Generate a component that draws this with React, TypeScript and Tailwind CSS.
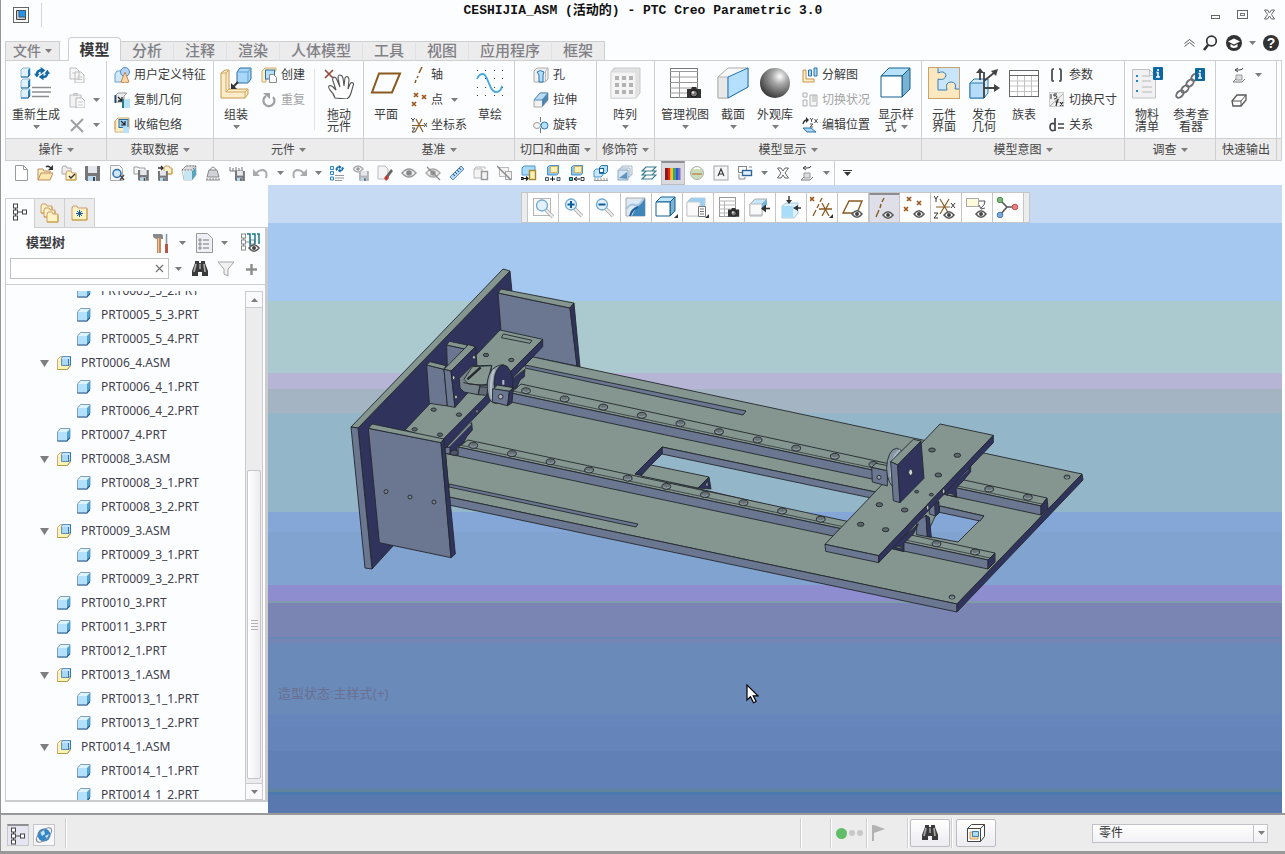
import React, { type ReactNode } from "react";

type Kids = { children?: ReactNode };

function Ico({ w = 16, h, children }: Kids & { w?: number; h?: number }) {
  return (
    <svg width={w} height={h ?? w} viewBox={`0 0 ${w} ${h ?? w}`} fill="none" aria-hidden="true" className="block shrink-0">
      {children}
    </svg>
  );
}

function Caret({ dark = false }: { dark?: boolean }) {
  return (
    <svg width="7" height="4" viewBox="0 0 7 4" aria-hidden="true" className="block shrink-0">
      <path d="M0 0h7L3.5 4z" fill={dark ? "#333" : "#7d7d7d"} />
    </svg>
  );
}

/* ---------- shared glyphs ---------- */

function Box({ x = 0, y = 0, s = 10, d = 3, front = "#b5e0fc", top = "#e6f4fd", side = "#4f9cc9", line = "#2c6a9c" }) {
  return (
    <g stroke={line} strokeWidth="1" strokeLinejoin="round">
      <path d={`M${x} ${y + d}l${d}-${d}h${s}l-${d} ${d}z`} fill={top} />
      <path d={`M${x + s} ${y + d}l${d}-${d}v${s}l-${d} ${d}z`} fill={side} />
      <rect x={x} y={y + d} width={s} height={s} fill={front} />
    </g>
  );
}

const MiniBox = ({ y }: { y: number }) => (
  <g>
    <path d={`M1 ${y + 2}l2-2h7v6l-2 3H1z`} fill="#dff1fc" stroke="#8fb9d4" />
    <path d={`M8 ${y + 2}l2-2v7l-2 2z`} fill="#2d7fb5" />
    <path d={`M1 ${y + 9}h7l2-3`} stroke="#1f6a9f" strokeWidth="1.200" />
  </g>
);

const Eye = ({ x = 0, y = 0 }) => (
  <g transform={`translate(${x} ${y})`}>
    <path d="M0 4q5-6.500 10 0q-5 6.500-10 0z" fill="#fff" stroke="#555" strokeWidth="1.500" />
    <circle cx="5" cy="4" r="2" fill="#444" />
  </g>
);

const Camera = ({ x = 0, y = 0 }) => (
  <g transform={`translate(${x} ${y})`}>
    <path d="M0 2h4l1-2h4l1 2h4v9H0z" fill="#333" />
    <circle cx="7" cy="6.500" r="3.500" fill="#777" stroke="#111" />
    <circle cx="6" cy="5.500" r="1.300" fill="#ddd" />
  </g>
);

const Floppy = ({ x = 0, y = 0, s = 1, c = "#77777a" }) => (
  <g transform={`translate(${x} ${y}) scale(${s})`}>
    <path d="M0 0h15v15H1.500L0 13.500z" fill={c} />
    <rect x="3" y="0" width="9" height="7" fill="#e4e7ec" />
    <rect x="3" y="10" width="8" height="5" fill="#b9d9f0" />
    <rect x="8" y="11" width="2" height="4" fill="#444" />
  </g>
);

const Cross = ({ x = 0, y = 0, s = 4 }) => (
  <path d={`M${x} ${y}l${s} ${s}m0-${s}l-${s} ${s}`} stroke="#a3561c" strokeWidth="1.700" />
);

const Sync = ({ x = 0, y = 0, s = 1 }) => (
  <g transform={`translate(${x} ${y}) scale(${s})`}>
    <path d="M3 8Q3 3 9 3.500" stroke="#1368a3" strokeWidth="2.600" />
    <path d="M7 0l5 3.500-5 4z" fill="#1368a3" />
    <path d="M14 6Q14 11 8 10.500" stroke="#1368a3" strokeWidth="2.600" />
    <path d="M10 14l-5-3.500 5-4z" fill="#1368a3" />
    <path d="M0 7h6l-3 4z M11 7h6l-3-4z" fill="#1368a3" />
  </g>
);

const Binoculars = () => (
  <Ico w={18}>
    <path d="M4 3V1h4v2h2V1h4v2l3 8v5h-6v-4H7v4H1v-5z" fill="#3a3a3a" />
    <path d="M5 4L3 12M13 4l1 8" stroke="#a8a8a8" strokeWidth="1.700" />
    <path d="M8 4h2v5H8z" fill="#8a8a8a" />
  </Ico>
);

const TreeGlyph = ({ c = "#444" }) => (
  <g stroke={c}>
    <path d="M3.500 5v2M3.500 11v2M6 9h4" />
    <rect x="1.500" y="1" width="4" height="4" fill="#fff" />
    <rect x="1.500" y="7" width="4" height="4" fill="#fff" />
    <rect x="1.500" y="13" width="4" height="4" fill="#fff" />
    <rect x="10.500" y="7" width="4" height="4" fill="#fff" />
  </g>
);

const Folder = ({ x = 0, y = 0, w = 11, h = 8 }) => (
  <g>
    <path d={`M${x} ${y + 2}l1-2h4l1 2h${w - 6}v${h}H${x}z`} fill="#fdf3c4" stroke="#cf9a72" />
    <path d={`M${x} ${y + 2 + h}h${w}v-${h - 1}`} stroke="#c4a63e" />
  </g>
);

/* ---------- ribbon: large icons, 32px ---------- */

const big = {
  regen: (
    <Ico w={32}>
      <MiniBox y={1} />
      <MiniBox y={12} />
      <MiniBox y={22} />
      <Sync x={14} y={0} s={0.95} />
      <path d="M12 20.500h19M12 25h19M12 29.500h17" stroke="#8e8e8e" strokeWidth="1.600" />
    </Ico>
  ),
  assemble: (
    <Ico w={32}>
      <path d="M1 6l4-3h4v19h19v5l-3 4H1z" fill="#fdebc9" stroke="#c59a4c" />
      <path d="M1 6h5v19h19v6M6 6l3-3M6 25l3-3M25 25l3-3" stroke="#d3a863" />
      <path d="M17 5l3-4h11v11l-3 4H17z" fill="#a9d7f7" stroke="#2c6a9c" />
      <path d="M17 5h11v11M28 5l3-4" stroke="#5ba4d1" />
      <path d="M18 15l-5 5" stroke="#333" strokeWidth="2" />
      <path d="M11 16v6h6z" fill="#333" />
    </Ico>
  ),
  drag: (
    <Ico w={32}>
      <path d="M2 3l8 8M10 3l-8 8" stroke="#94483a" strokeWidth="1.700" />
      <path d="M12 31q-1-4-5-8-2-3-1-4 2-1 4 1l3 3-3-9q-1-3 1-4 2 0 3 3l3 7-2-9q0-3 2-3t3 3l1 8 1-8q1-2 3-1 1 1 1 3l-1 9 2-5q1-2 3-1 1 1 0 3l-2 7q-1 4-4 6z" fill="#fff" stroke="#555" strokeWidth="1.100" />
    </Ico>
  ),
  plane: (
    <Ico w={32}>
      <path d="M9 6.500h21l-8 19H2z" stroke="#8a5a20" strokeWidth="2" />
    </Ico>
  ),
  sketch: (
    <Ico w={32}>
      {[3, 11, 20, 28].map((y) => [3, 11, 20, 28].map((x) => <rect key={x + "-" + y} x={x} y={y} width="1" height="1" fill="#333" />))}
      <path d="M3 12q2-5 6-5c5 0 6 18 13 18q5 0 6-6" stroke="#4aa8e0" strokeWidth="1.800" />
    </Ico>
  ),
  pattern: (
    <Ico w={32}>
      <path d="M2 5l3-4h26v25l-4 5H2z" fill="#e2e2e2" stroke="#c9c9c9" />
      <rect x="2" y="5" width="25" height="26" fill="#f4f4f4" stroke="#d9d9d9" />
      {[10, 17, 24].map((y) => [6, 13, 20].map((x) => <rect key={x + "-" + y} x={x} y={y - 1} width="4" height="4" fill="#b2b2b2" />))}
    </Ico>
  ),
  views: (
    <Ico w={32}>
      <rect x="1.500" y="1.500" width="27" height="29" fill="#fff" stroke="#777" />
      <path d="M1 4.500h28M1 10h28M1 15.500h28M1 21h28M1 26h28M10.500 4v27" stroke="#9a9a9a" />
      <Camera x={18} y={20} />
    </Ico>
  ),
  section: (
    <Ico w={32}>
      <path d="M1 10L11 1h20v19l-20 11H1z" fill="#f8f8f8" stroke="#aaa" />
      <path d="M1 10h10v21H1z" fill="#e8e8e8" stroke="#b5b5b5" />
      <path d="M11 10l20-9v19L11 31z" fill="#b5e0fd" stroke="#1f73b8" />
    </Ico>
  ),
  sphere: (
    <Ico w={32}>
      <defs>
        <radialGradient id="ball" cx="0.660" cy="0.280" r="0.750">
          <stop offset="0" stopColor="#fff" />
          <stop offset="0.350" stopColor="#a8a8a8" />
          <stop offset="1" stopColor="#3a3a3a" />
        </radialGradient>
      </defs>
      <circle cx="16" cy="16" r="15" fill="url(#ball)" />
    </Ico>
  ),
  display: (
    <Ico w={32}>
      <Box x={1} y={1} s={21} d={8} front="#fff" top="#b8e2fc" side="#79b2d2" line="#14618f" />
    </Ico>
  ),
  iface: (
    <Ico w={32}>
      <rect x="1" y="1" width="30" height="30" fill="#c8e5fb" />
      <path d="M1 1h9v5q6-3 8 2-1 6-8 4v11h9q-2-8 4-8 6 0 4 7h4v9H1z" fill="#fbe8c0" />
      <path d="M10 1v5q6-3 8 2-1 6-8 4v11h9q-2-8 4-8 6 0 4 7h4" stroke="#3a80b6" />
      <rect x=".500" y=".500" width="31" height="31" stroke="#c9a468" />
    </Ico>
  ),
  publish: (
    <Ico w={32}>
      <path d="M2 16l4-4h14v14l-4 5H2z" fill="#d5ecfb" stroke="#2c7ab0" />
      <path d="M2 16h14v15H2z" fill="#b5dcf8" stroke="#2c7ab0" />
      <path d="M16 21V5M16 21h12M16 14L27 5M16 16v15" stroke="#444" strokeWidth="1.800" />
      <path d="M12 1l4 5h-8zM32 21l-6-4v8zM30 2l-2 7-5-5z" fill="#444" />
      <path d="M12 5v8" stroke="#444" strokeWidth="1.800" />
    </Ico>
  ),
  family: (
    <Ico w={32}>
      <rect x="1.500" y="3.500" width="29" height="26" fill="#fff" stroke="#666" />
      <path d="M1 8.500h30" stroke="#666" />
      <path d="M2 14h28M2 19h28M2 24.500h28M9.500 9v20M16.500 9v20M23.500 9v20" stroke="#c2c2c2" />
    </Ico>
  ),
  bom: (
    <Ico w={32}>
      <path d="M1.500 2.500h17l6 6v22.500h-23z" fill="#f1f1f3" stroke="#c2c2c2" />
      <path d="M18.500 2.500v6h6" stroke="#c2c2c2" />
      <path d="M11 9h8M11 14h9M11 20h10M11 25h10" stroke="#b8b8b8" />
      <path d="M5 8h2v2H5zM5 13h2v2H5zM5 23h2v2H5z" fill="#2385d0" />
      <rect x="22" y="0" width="10" height="13" rx="1" fill="#0d67a3" />
      <path d="M27 2v2M25.500 5.500H27V10M25 10h4" stroke="#fff" strokeWidth="1.500" />
    </Ico>
  ),
  refs: (
    <Ico w={32}>
      {[[5, 27], [10, 22], [15, 16], [20, 10]].map(([x, y]) => (
        <ellipse key={x} cx={x} cy={y} rx="4.500" ry="2.800" transform={`rotate(-45 ${x} ${y})`} stroke="#707070" strokeWidth="1.900" />
      ))}
      <rect x="20" y="1" width="10" height="13" rx="1" fill="#0d67a3" />
      <path d="M25 3v2M23.500 6.500H25V11M23 11h4" stroke="#fff" strokeWidth="1.500" />
    </Ico>
  ),
};

/* ---------- 16px icons ---------- */

const sm: Record<string, ReactNode> = {
  copy: <Ico><path d="M1 1h6l3 3v8H1z M6 5h6l3 3v8H6z" fill="#f6f6f6" stroke="#bdbdbd" /><path d="M3 6h4M8 10h5M8 12.500h5" stroke="#ccc" /></Ico>,
  paste: <Ico><path d="M1 3h11v12H1z" fill="#f3f3f3" stroke="#c0c0c0" /><path d="M4 1h5v3H4z" fill="#ccc" /><path d="M7 6h6l3 3v7H7z" fill="#fafafa" stroke="#b5b5b5" /><path d="M9 10h5M9 13h5" stroke="#ccc" /></Ico>,
  del: <Ico><path d="M2 3l12 12M14 2L2 14" stroke="#a2a2a2" strokeWidth="2.200" /></Ico>,
  udf: <Ico><path d="M1 7l2-3h7v8l-2 3H1z" fill="#cfe8fa" stroke="#6ba0c9" /><circle cx="11" cy="5" r="4.500" fill="#b5d3f2" stroke="#5587c4" /><path d="M11 5l4 10q-4 2-8 0z" fill="#f9d7a5" stroke="#c08a50" /></Ico>,
  copygeo: <Ico><path d="M1 4l3-3h9l-3 3v6H1z" fill="#ececec" stroke="#999" /><path d="M1.500 3v8" stroke="#214a6b" strokeWidth="1.800" /><path d="M4 5l4 4M8 5v4H4" stroke="#222" strokeWidth="1.300" /><path d="M9 9l3-2h4v9H9z" fill="#b5e2f6" /><path d="M9 7v9" stroke="#14757a" strokeWidth="1.800" /></Ico>,
  shrink: <Ico><path d="M1 4l3-3h11v11H1z" fill="#fdeec0" stroke="#d6a86a" /><path d="M1 4v11h9" stroke="#d6a86a" /><path d="M2 5h8v9H2z" fill="#fdeec0" /><rect x="5" y="2.500" width="9" height="8" fill="#a5d4f4" stroke="#2b6ea8" /><path d="M7 4l4 4M11 4v4H7" stroke="#222" strokeWidth="1.200" /><rect x="9" y="10" width="6" height="6" fill="#b7e2fa" /></Ico>,
  create: <Ico><path d="M1 4l3-3h11v3H5v11H1z" fill="#fdeec0" stroke="#d6a86a" /><rect x="4.500" y="3" width="9" height="9" fill="#b5defa" stroke="#2b6ea8" /><path d="M8.500 7.500h4l3 3v5h-7z" fill="#fafafa" stroke="#888" /></Ico>,
  repeat: <Ico><path d="M5 4A5.500 5.500 0 1 0 12 5" stroke="#a0a0a0" strokeWidth="2.200" /><path d="M2 1h7v6z" fill="#a0a0a0" /></Ico>,
  axis: <Ico><path d="M11 0l-3 6M7 9l-1 2M5 13l-1 3" stroke="#8a5a20" strokeWidth="1.500" /></Ico>,
  points: <Ico><Cross x={3} y={1} /><Cross x={11} y={3} /><Cross x={1} y={10} /></Ico>,
  csys: <Ico><path d="M1 8.500h12M4 15l7-13M5 2l7 13" stroke="#8a5a20" strokeWidth="1.200" /><path d="M0 1l2 2 2-2M2 3v2M1 11h3l-3 4h3M13 6l3 4m0-4l-3 4" stroke="#444" /></Ico>,
  hole: <Ico><path d="M1 4l3-3h11v11l-3 3H1z" fill="#f1f1f1" stroke="#aaa" /><path d="M4 5q3-3 7 0l-1 3v7H6V8z" fill="#b8defa" stroke="#2375b0" /><path d="M12.500 4v11M12.500 4L15 1" stroke="#bbb" /></Ico>,
  extrude: <Ico><path d="M1 8l6-7h8v7l-6 7H1z" fill="#f1f1f1" stroke="#aaa" /><path d="M1 8l6-7h8L9 8z" fill="#b8dcf4" stroke="#5590ba" /><path d="M9 8l6-7v7l-6 7z" fill="#4f86b0" /></Ico>,
  revolve: <Ico><path d="M7.500 0v5M7.500 7v2M7.500 11v5" stroke="#777" /><ellipse cx="4" cy="8.500" rx="3.500" ry="3" fill="#f5f5f5" stroke="#999" /><ellipse cx="11.500" cy="8.500" rx="3.500" ry="3.500" fill="#b8e0fb" stroke="#2578b4" /></Ico>,
  explode: <Ico><path d="M1 3h3v9h8v3H1z" fill="#fdf1c5" stroke="#c98f53" /><path d="M6.500 3h3v6h-3z M12 1h3v8h-3z" fill="#a9d7f7" stroke="#2a72ac" /></Ico>,
  toggle: <Ico><path d="M1 1h4v4H1z M1 8h4v6H1z M8 3h7v11H8zM11 3v7M13 3v7" stroke="#b0b0b0" fill="#f5f5f5" /></Ico>,
  editpos: <Ico><path d="M1 7q1-4 4-4" stroke="#333" strokeWidth="1.300" /><path d="M4 0l3 3-3 3z" fill="#333" /><path d="M8 1l1.500 2L11 1M9.500 3v2M12.500 2l3 4m0-4l-3 4M8 7h3l-3 3h3" stroke="#555" /><path d="M1 11h8l5 4H5z" fill="#a9d7f7" stroke="#2a72ac" /></Ico>,
  params: <Ico><path d="M5 2H4q-1 0-1 2v8q0 2 1 2h1M10 2h1q1 0 1 2v8q0 2-1 2h-1" stroke="#444" strokeWidth="1.700" /></Ico>,
  dims: <Ico><rect x="0.500" y="0.500" width="14" height="14" fill="#f0f0f0" stroke="#ccc" /><path d="M2 2v5M8 2H5v2q3-1 3 1t-3 2" stroke="#333" /><path d="M1 14L14 2" stroke="#aaa" /><path d="M10 8q-2-1-2 2l-1 4M6.500 10h3M11 10l3 4m0-4l-3 4" stroke="#222" strokeWidth="1.100" /></Ico>,
  relation: <Ico><path d="M6 1v13M6 7q-5-2-5 3t5 3M9 7h6M9 11h6" stroke="#444" strokeWidth="1.700" /></Ico>,
  quick1: <Ico><path d="M4 3h4q4 0 4-2M4 3l3-2M4 3l3 2" stroke="#444" /><path d="M5 8h6v5H5z" fill="#ddd" stroke="#999" /><path d="M2 15l3-3M2 15h9l3-3" stroke="#777" /></Ico>,
  quick2: <Ico><path d="M1 9l5-6h9v5l-5 6H2z" fill="#fff" stroke="#555" strokeWidth="1.300" /><path d="M1 9h9l5-6M10 9v5" stroke="#555" /></Ico>,
  newf: <Ico><path d="M2.500.500h8l4 4v11h-12z" fill="#fff" stroke="#9a9a9a" /><path d="M10.500.500v4h4" stroke="#9a9a9a" /></Ico>,
  open: <Ico><path d="M1 15V4h5l1 2h6v3" fill="#fdf0c0" stroke="#c08a58" /><path d="M1 15l3-7h12l-3 7z" fill="#fde7b0" stroke="#c08a58" /><path d="M9 2q2-2 5 1" stroke="#333" strokeWidth="1.500" /><path d="M16 0v5h-5z" fill="#333" /></Ico>,
  workdir: <Ico><path d="M1 3l1-2h3l1 2h4v6H1z" fill="#eee" stroke="#aaa" /><Folder x={5} y={6} w={10} h={7} /><path d="M8 11l2 2 4-4" stroke="#333" strokeWidth="1.400" /></Ico>,
  save: <Ico><Floppy x={0} y={1} /></Ico>,
  preview: <Ico><path d="M1.500.500h9l3 3v12h-12z" fill="#f7f7f7" stroke="#aaa" /><circle cx="8" cy="8.500" r="4" fill="#cfe6f8" stroke="#286fae" strokeWidth="1.500" /><path d="M11 10l4 5M15 10l-4 5" stroke="#444" strokeWidth="1.300" /></Ico>,
  backup: <Ico><path d="M1 2h4l1 1h6v6H1z" fill="#f6f6f6" stroke="#999" /><Floppy x={5} y={5} s={0.72} /></Ico>,
  saveas: <Ico><Folder x={7} y={1} w={8} h={6} /><path d="M1 3h5M4 1l2 2-2 2" stroke="#333" strokeWidth="1.300" /><Floppy x={1} y={6} s={0.66} /></Ico>,
  shade: <Ico><path d="M1 5l4-4h10v9l-4 5H3z" fill="#f3f7f8" stroke="#bbb" /><path d="M1 5l4-4h10l-4 4z" fill="#ddd" stroke="#777" strokeDasharray="2 1" /><path d="M3 6h8v9H3z" fill="#c5e6f2" /><path d="M11 6l4-4v8l-4 5z" fill="#5ba5ba" /></Ico>,
  mass: <Ico><path d="M2 12l2-7h8l2 7z" fill="#d2d2da" stroke="#888" /><path d="M5 5q3-6 6 0" stroke="#888" /><path d="M1 15h14M2 13v2M5 13v2M8 13v2M11 13v2M14 13v2" stroke="#888" /></Ico>,
  measure: <Ico><path d="M1 2v4h13M4 3v3M7 2v4M10 3v3M13 2v4" stroke="#777" /><Floppy x={6} y={6} s={0.66} /></Ico>,
  undo: <Ico><path d="M3 9q2-4 7-4 5 1 3 8" stroke="#aaa" strokeWidth="2" /><path d="M0 4v7h7z" fill="#aaa" /></Ico>,
  redo: <Ico><path d="M13 9q-2-4-7-4-5 1-3 8" stroke="#aaa" strokeWidth="2" /><path d="M16 4v7H9z" fill="#aaa" /></Ico>,
  regen: <Ico><path d="M1.500 1.500h3v3h-3zM1.500 6.500h3v3h-3zM1.500 12h3v3h-3z" fill="#e3f3fd" stroke="#2f86c0" /><Sync x={6} y={0} s={0.55} /><path d="M6 10.500h9M6 13h9M6 15.500h7" stroke="#999" /></Ico>,
  eyesave: <Ico><path d="M0 4q5-6 10 0q-5 6-10 0z" stroke="#aaa" strokeWidth="1.400" /><circle cx="5" cy="4" r="1.800" fill="#999" /><Floppy x={6} y={6} s={0.66} c="#b5b5b5" /></Ico>,
  eraser: <Ico><path d="M1 1h7l3 3v10H1z" fill="#f3f3f5" stroke="#bbb" /><path d="M8 12l6-8 2 2-6 8z" fill="#666" /><path d="M7 13l3-3 2 3-3 3z" fill="#c03c32" /></Ico>,
  eye: <Ico><path d="M1 8q7-8 14 0q-7 8-14 0z" fill="#eee" stroke="#999" strokeWidth="1.500" /><circle cx="8" cy="8" r="2.800" fill="#888" /></Ico>,
  eyeoff: <Ico><path d="M1 8q7-8 14 0q-7 8-14 0z" fill="#eee" stroke="#aaa" strokeWidth="1.500" /><circle cx="8" cy="8" r="2.800" fill="#999" /><path d="M2 2l13 13" stroke="#888" strokeWidth="1.200" /></Ico>,
  ruler: <Ico><path d="M1 12L12 1l3 3L4 15z" fill="#b5d8f2" stroke="#5a8ab5" /><path d="M4 9l2 2M6 7l2 2M8 5l2 2M10 3l2 2" stroke="#2b5c88" /></Ico>,
  g1: <Ico><path d="M1 4l2-2h9v2M1 4h8v9H1z" fill="#f3f3f3" stroke="#bbb" /><rect x="8.500" y="6.500" width="6" height="8" fill="#f3f3f3" stroke="#999" strokeWidth="1.400" /></Ico>,
  g2: <Ico><rect x="2.500" y="2.500" width="9" height="9" fill="#f3f3f3" stroke="#bbb" /><rect x="8.500" y="6.500" width="6" height="8" fill="#eee" stroke="#aaa" /><path d="M0 1l14 14" stroke="#888" strokeWidth="1.300" /></Ico>,
  a1: <Ico><path d="M1 3l2-2h11v9H1z" fill="#a9dafa" stroke="#4b95c8" /><rect x="8.500" y="5.500" width="6" height="9" fill="#fdf0b5" stroke="#a5892e" strokeWidth="1.400" /><path d="M0 12.500h2v2H0zM2 13.500h5M5 11.500l2 2-2 2" stroke="#111" strokeWidth="1.200" /></Ico>,
  a2: <Ico><path d="M2.500 2l2-1.500h9v8l-2 1.500h-9z" fill="#8cc4ec" stroke="#4b95c8" /><rect x="5.500" y="1.500" width="7" height="6" fill="#fdf0b5" stroke="#d5b570" /><path d="M.500 12.500h3v3h-3zM12 12.500h3v3h-3z" fill="#bfe0f7" stroke="#555" /><path d="M5 14h5M7.500 11.500v5" stroke="#111" /></Ico>,
  a3: <Ico><path d="M2.500 2l2-1.500h9v8l-2 1.500h-9z" fill="#8cc4ec" stroke="#4b95c8" /><rect x="5.500" y="1.500" width="7" height="6" fill="#fdf0b5" stroke="#d5b570" /><path d="M.500 12.500h3v3h-3z" fill="#30d8e8" stroke="#333" /><path d="M12 12.500h3v3h-3z" fill="#fff" stroke="#333" /><path d="M11 14H6M8 12l-3 2 3 2" stroke="#111" /></Ico>,
  a4: <Ico><path d="M1 6l2-2h7v6l-2 2H1z" fill="#c7e6fa" stroke="#4b95c8" /><path d="M6.500 2.500l2-2h6v6l-2 2h-6z" fill="#b5defa" stroke="#2578b4" /><rect x="6.500" y="3.500" width="4" height="4" fill="#fff" stroke="#14618f" /><path d="M1 15.500h14M2 13v2M5 13v2M8 13v2M11 13v2M14 13v2" stroke="#999" /></Ico>,
  a5: <Ico><path d="M5 1h10v9H5z" fill="#f3f8fc" stroke="#a5b8c8" /><path d="M3 3h10v9H3z" fill="#e8f1f9" stroke="#a5b8c8" /><path d="M1 5h10v10H1z" fill="#d5e4f2" stroke="#8aa5c0" /><path d="M2 13l8-6v7z" fill="#5f93c0" /></Ico>,
  layers: <Ico><path d="M1 14l4-4h10l-4 4z M1 10l4-4h10l-4 4z M1 6l4-4h10l-4 4z" fill="#fff" stroke="#3a7c8c" strokeWidth="1.200" /></Ico>,
  spectrum: <Ico><path d="M0 2h3v12H0z" fill="#8c1a1a" /><path d="M3 2h2.500v12H3z" fill="#e82020" /><path d="M5.500 2H8v12H5.500z" fill="#f5c51a" /><path d="M8 2h2.500v12H8z" fill="#2fae4a" /><path d="M10.500 2H13v12h-2.500z" fill="#2358d8" /><path d="M13 2h2.500v12H13z" fill="#7a6ac0" /></Ico>,
  scene: <Ico><circle cx="8" cy="8" r="6.500" fill="#cbdcb8" stroke="#b0b0b0" /><path d="M3 9h10" stroke="#c09a6a" strokeWidth="1.800" /><path d="M5 4q3-2 6 0" stroke="#fff" strokeWidth="1.500" /></Ico>,
  note: <Ico><rect x="1" y="1" width="14" height="14" fill="#f3f5f8" stroke="#a5a5a5" /><path d="M5 11l3-7 3 7M6 9h4" stroke="#333" strokeWidth="1.100" /></Ico>,
  windows: <Ico><rect x="1.500" y="1.500" width="8" height="6" fill="#fff" stroke="#888" /><rect x="5.500" y="5.500" width="9" height="5" fill="#e5f1fb" stroke="#2c679c" strokeWidth="1.400" /><path d="M2 9v5h6v-2M12 2h3" stroke="#888" /></Ico>,
  close: <Ico><path d="M2.500 3h3.500l2 3 2-3h3.500l-3.500 5 3.500 5H10l-2-3-2 3H2.500L6 8z" fill="#fff" stroke="#666" /></Ico>,
};

/* ---------- ribbon building blocks ---------- */

function Big({ icon, label, label2, width, caret = false }: { icon: ReactNode; label: string; label2?: string; width: string; caret?: boolean }) {
  return (
    <button type="button" className={`flex shrink-0 flex-col items-center pt-[6px] text-xs leading-3 text-[#3a3a3a] ${width}`}>
      {icon}
      <span className="mt-[10px] whitespace-nowrap">{label}</span>
      {label2 && (
        <span className="flex items-center gap-1 whitespace-nowrap">
          {label2}
          {caret && <Caret />}
        </span>
      )}
      {caret && !label2 && <span className="mt-1"><Caret /></span>}
    </button>
  );
}

function Row({ icon, label, off = false, caret = false }: { icon: string; label?: string; off?: boolean; caret?: boolean }) {
  return (
    <button type="button" aria-label={label ?? icon} className={`flex h-[25px] items-center gap-1 whitespace-nowrap text-xs ${off ? "text-[#a3a3a3]" : "text-[#3a3a3a]"}`}>
      {sm[icon]}
      {label && <span>{label}</span>}
      {caret && <span className="ml-1"><Caret /></span>}
    </button>
  );
}

function Group({ label, width, caret = true, children }: Kids & { label: string; width: string; caret?: boolean }) {
  return (
    <section className={`flex shrink-0 flex-col border-r border-[#cfcfd2] ${width}`}>
      <div className="flex h-[77px]">{children}</div>
      <button type="button" className="flex h-[22px] items-center justify-center gap-1 border-t border-[#cfcfd2] bg-[#ececed] text-xs whitespace-nowrap text-[#444]">
        {label}
        {caret && <Caret />}
      </button>
    </section>
  );
}

const tabs = ["分析", "注释", "渲染", "人体模型", "工具", "视图", "应用程序", "框架"];

function Header() {
  return (
    <header className="shrink-0">
      <div className="grid h-[33px] grid-cols-[1fr_auto_1fr] items-start">
        <div className="flex items-center gap-3 pt-[3px] pl-3">
          <Ico>
            <rect x=".500" y=".500" width="15" height="15" fill="#fafafa" stroke="#666" />
            <path d="M3.500 3.500h9v9h-9z" fill="#c5ced8" stroke="#444" />
            <path d="M6 3.500h6.500V10H6z" fill="#1f96f2" stroke="#456" />
          </Ico>
          <span className="h-6 w-px bg-[#d5d5d8]" />
        </div>
        <h1 className="pt-[2px] font-['Liberation_Mono','Noto_Sans_CJK_SC',monospace] text-[13px] leading-[18px] font-bold text-[#111]">
          CESHIJIA_ASM (活动的) - PTC Creo Parametric 3.0
        </h1>
        <div className="flex items-center justify-end gap-4 pt-[9px] pr-[10px]">
          <button type="button" aria-label="最小化"><Ico w={11}><rect x="1.500" y="6.500" width="8" height="3" stroke="#666" /></Ico></button>
          <button type="button" aria-label="最大化"><Ico w={11}><rect x=".500" y="1.500" width="10" height="8" stroke="#666" /><rect x="3.500" y="4.500" width="4" height="2" stroke="#777" /></Ico></button>
          <button type="button" aria-label="关闭"><Ico w={11}><path d="M.500 1h3l2 3 2-3h3L7.500 5.500l3 4.500h-3l-2-3-2 3h-3l3-4.500z" stroke="#666" /></Ico></button>
        </div>
      </div>

      <div className="relative z-10 -mb-px flex h-7 items-end justify-between pr-[6px] pl-1 text-[15px]">
        <nav className="flex items-end font-medium text-[#808085]">
          <button type="button" className="mr-2 flex h-[20px] w-[55px] items-center justify-center gap-1 border border-[#cfcfd2] bg-[#ececed] text-sm">
            文件<Caret />
          </button>
          <button type="button" className="h-6 w-[53px] rounded-t-sm border border-b-0 border-[#cfcfd2] bg-[#fcfdff] text-[15px] leading-6 font-bold text-[#3a3a3c]">模型</button>
          {tabs.map((t) => (
            <button key={t} type="button" className="h-[20px] border border-l-0 border-[#cfcfd2] border-r-[#e0e0e6] bg-[#ececed] px-[11px] leading-[18px] last:border-r-[#cfcfd2]">
              {t}
            </button>
          ))}
        </nav>
        <div className="flex h-[20px] -translate-y-2 items-center text-[#444]">
          <button type="button" aria-label="收起功能区"><Ico w={11} h={8}><path d="M.500 4.500L5.500.500l5 4M.500 7.500l5-4 5 4" stroke="#555" /></Ico></button>
          <button type="button" aria-label="搜索" className="ml-[7px]"><Ico><circle cx="9.500" cy="6" r="4.800" stroke="#333" strokeWidth="1.700" /><path d="M6 10l-4 5" stroke="#333" strokeWidth="2.600" /></Ico></button>
          <button type="button" aria-label="学习" className="ml-2"><Ico><circle cx="8" cy="8" r="8" fill="#333" /><path d="M2 6.500l6-3 6 3-6 3z" fill="#fff" /><path d="M4.500 9v3q3.500 2 7 0V9L8 11z" fill="#fff" /></Ico></button>
          <span className="mx-[7px]"><Caret /></span>
          <button type="button" aria-label="帮助" className="grid size-4 place-items-center rounded-full bg-[#333] font-['Liberation_Sans',sans-serif] text-sm leading-4 font-bold text-white">?</button>
        </div>
      </div>

      <div className="mr-[3px] ml-1 flex border border-[#cfcfd2]">
        <Group label="操作" width="w-[101px]">
          <Big icon={big.regen} label="重新生成" width="w-[60px]" caret />
          <div className="pt-px pl-[3px]">
            <Row icon="copy" />
            <Row icon="paste" caret />
            <Row icon="del" caret />
          </div>
        </Group>
        <Group label="获取数据" width="w-[107px]">
          <div className="pt-px pl-[7px]">
            <Row icon="udf" label="用户定义特征" />
            <Row icon="copygeo" label="复制几何" />
            <Row icon="shrink" label="收缩包络" />
          </div>
        </Group>
        <Group label="元件" width="w-[150px]">
          <Big icon={big.assemble} label="组装" width="w-[44px]" caret />
          <div className="w-[56px] pt-px pl-[3px]">
            <Row icon="create" label="创建" />
            <Row icon="repeat" label="重复" off />
          </div>
          <span className="my-2 w-px bg-[#e2e2e8]" />
          <Big icon={big.drag} label="拖动" label2="元件" width="w-[48px]" />
        </Group>
        <Group label="基准" width="w-[151px]">
          <Big icon={big.plane} label="平面" width="w-[44px]" />
          <div className="w-[60px] pt-px pl-[3px]">
            <Row icon="axis" label="轴" />
            <Row icon="points" label="点" caret />
            <Row icon="csys" label="坐标系" />
          </div>
          <Big icon={big.sketch} label="草绘" width="w-[44px]" />
        </Group>
        <Group label="切口和曲面" width="w-[82px]">
          <div className="pt-px pl-[18px]">
            <Row icon="hole" label="孔" />
            <Row icon="extrude" label="拉伸" />
            <Row icon="revolve" label="旋转" />
          </div>
        </Group>
        <Group label="修饰符" width="w-[58px]">
          <Big icon={big.pattern} label="阵列" width="w-[56px]" caret />
        </Group>
        <Group label="模型显示" width="w-[267px]">
          <Big icon={big.views} label="管理视图" width="w-[60px]" caret />
          <Big icon={big.section} label="截面" width="w-[36px]" caret />
          <Big icon={big.sphere} label="外观库" width="w-[48px]" caret />
          <div className="w-[72px] pt-px pl-[3px]">
            <Row icon="explode" label="分解图" />
            <Row icon="toggle" label="切换状况" off />
            <Row icon="editpos" label="编辑位置" />
          </div>
          <Big icon={big.display} label="显示样" label2="式" width="w-[50px]" caret />
        </Group>
        <Group label="模型意图" width="w-[203px]">
          <Big icon={big.iface} label="元件" label2="界面" width="w-[44px]" />
          <Big icon={big.publish} label="发布" label2="几何" width="w-[36px]" />
          <Big icon={big.family} label="族表" width="w-[44px]" />
          <div className="pt-px pl-[3px]">
            <Row icon="params" label="参数" />
            <Row icon="dims" label="切换尺寸" />
            <Row icon="relation" label="关系" />
          </div>
        </Group>
        <Group label="调查" width="w-[91px]">
          <Big icon={big.bom} label="物料" label2="清单" width="w-[44px]" />
          <Big icon={big.refs} label="参考查" label2="看器" width="w-[44px]" />
        </Group>
        <Group label="快速输出" width="w-[61px]" caret={false}>
          <div className="pt-px pl-[15px]">
            <Row icon="quick1" caret />
            <Row icon="quick2" />
          </div>
        </Group>
        <div className="flex flex-1 flex-col justify-end"><span className="h-[22px] border-t border-[#cfcfd2] bg-[#ececed]" /></div>
      </div>
      <QuickBar />
    </header>
  );
}

const quick = [
  "newf", "open", "workdir", "save", "preview", "backup", "saveas", "shade", "mass", "measure", "undo", "^", "redo", "^",
  "regen", "eyesave", "eraser", "eye", "eyeoff", "ruler", "g1", "g2", "a1", "a2", "a3", "a4", "a5", "layers", "spectrum",
  "scene", "note", "windows", "^", "close", "quick1", "^",
];

function QuickBar() {
  return (
    <div role="toolbar" aria-label="快速访问" className="flex h-6 items-center pl-2">
      {quick.map((k, i) =>
        k === "^" ? (
          <button key={i} type="button" aria-label="更多" className="flex h-6 w-[14px] items-center justify-center"><Caret /></button>
        ) : (
          <button
            key={i}
            type="button"
            aria-label={k}
            className={`flex h-6 w-6 items-center justify-center ${k === "spectrum" ? "border border-t-2 border-[#bcbcc2] border-t-[#8f8f94] bg-[#d9d9de]" : ""}`}
          >
            {sm[k]}
          </button>
        ),
      )}
      <span className="mx-px h-6 w-px bg-[#cfcfd2]" />
      <button type="button" aria-label="自定义" className="flex h-6 w-[22px] flex-col items-center justify-center gap-px">
        <span className="h-px w-[9px] bg-[#333]" />
        <Caret dark />
      </button>
    </div>
  );
}

/* ---------- model tree ---------- */

const rows: [string, number][] = [
  ["PRT0005_5_2.PRT", 2], ["PRT0005_5_3.PRT", 2], ["PRT0005_5_4.PRT", 2], ["PRT0006_4.ASM", 1], ["PRT0006_4_1.PRT", 2],
  ["PRT0006_4_2.PRT", 2], ["PRT0007_4.PRT", 1], ["PRT0008_3.ASM", 1], ["PRT0008_3_1.PRT", 2], ["PRT0008_3_2.PRT", 2],
  ["PRT0009_3.ASM", 1], ["PRT0009_3_1.PRT", 2], ["PRT0009_3_2.PRT", 2], ["PRT0010_3.PRT", 1], ["PRT0011_3.PRT", 1],
  ["PRT0012_1.PRT", 1], ["PRT0013_1.ASM", 1], ["PRT0013_1_1.PRT", 2], ["PRT0013_1_2.PRT", 2], ["PRT0014_1.ASM", 1],
  ["PRT0014_1_1.PRT", 2], ["PRT0014_1_2.PRT", 2],
];

function TreeRow({ name, level }: { name: string; level: number }) {
  const asm = name.endsWith("ASM");
  return (
    <li className={`flex h-6 items-center ${level === 2 ? "pl-[71px]" : asm ? "pl-[34px]" : "pl-[51px]"}`}>
      {asm && (
        <button type="button" aria-label={`折叠 ${name}`} className="mr-2">
          <Ico w={9} h={7}><path d="M0 0h9L4.500 7z" fill="#7e7e7e" /></Ico>
        </button>
      )}
      {asm ? (
        <Ico w={14}>
          <path d="M.500 3.500l3-3h10v9l-3 4H.500z" fill="#fdf3b4" stroke="#d8a27a" />
          <path d="M4.500 2.500l1-2h8v8l-2 1h-7z" fill="#c5e3fa" stroke="#5a8fc0" />
          <path d="M5 3h6.500v6H5z" fill="#a9d7f8" />
          <path d="M11.500 3v7M13.500 .500v9" stroke="#3574ac" />
          <path d="M.500 13.500h10l3-4" stroke="#b39a4a" />
        </Ico>
      ) : (
        <Ico w={14}>
          <path d="M.500 4l3-3.500h9.500v8.500l-3 4H.500z" fill="#dff2fd" stroke="#7ba0bd" />
          <path d="M10 4l3-3v8.500L10 13z" fill="#4fa3d4" />
          <path d="M1 4h9v8.500H1z" fill="#b5e0fc" />
          <path d="M.500 13H10l3-3.500" stroke="#2c5f92" strokeWidth="1.200" />
        </Ico>
      )}
      <span className="ml-[10px] font-['Noto_Sans',sans-serif] text-xs text-[#40404a]">{name}</span>
    </li>
  );
}

function ModelTree() {
  return (
    <aside className="flex w-[267px] shrink-0 flex-col pt-[13px] pb-[11px] pl-1">
      <div className="relative z-10 -mb-px flex h-[30px]">
        <button type="button" aria-label="模型树" className="flex w-[30px] items-center justify-center border border-b-0 border-[#cfcfd2] bg-[#fcfdff] pb-1">
          <Ico w={16} h={18}><TreeGlyph /></Ico>
        </button>
        <button type="button" aria-label="文件夹" className="flex w-[30px] items-center justify-center border border-l-0 border-[#cfcfd2] bg-[#ececed]">
          <Ico w={20}><Folder x={1} y={1} w={11} h={7} /><Folder x={4} y={5} w={11} h={7} /><Folder x={7} y={9} w={11} h={8} /></Ico>
        </button>
        <button type="button" aria-label="收藏夹" className="flex w-[30px] items-center justify-center border border-l-0 border-[#cfcfd2] bg-[#ececed]">
          <Ico w={18}><Folder x={1} y={2} w={15} h={12} /><path d="M8.500 6v7M5 9.500h7M6 7l5 5M11 7l-5 5" stroke="#135f9c" /></Ico>
        </button>
      </div>

      <div className="flex min-h-0 flex-1 flex-col border border-r-[3px] border-b-2 border-[#cbcbcd]">
        <div className="flex h-[30px] items-center pr-[5px] pl-5">
          <h2 className="flex-1 text-[13px] font-bold text-[#3c3c40]">模型树</h2>
          <button type="button" aria-label="设置" className="flex items-center gap-[9px]">
            <Ico w={18} h={20}>
              <path d="M1 1h8q2 0 2 2v3H4L1 4z" fill="#8a8a8a" />
              <path d="M5 5h4v15H5z" fill="#c98a5c" />
              <path d="M6 5h1v15H6z" fill="#e8c3a0" />
              <path d="M14.500 1v10" stroke="#8a96a8" strokeWidth="1.600" />
              <path d="M13 11h3v9h-3z" fill="#b4594a" />
            </Ico>
            <Caret />
          </button>
          <button type="button" aria-label="显示" className="ml-[10px] flex items-center gap-2">
            <Ico w={17} h={20}>
              <path d="M.500.500h11l5 5v14H.500z" fill="#eef0f6" stroke="#999" />
              <path d="M7 7h6M7 11h6M7 15h6" stroke="#777" />
              <path d="M3 6h2v2H3zM3 10h2v2H3zM3 14h2v2H3z" stroke="#777" strokeWidth=".800" />
            </Ico>
            <Caret />
          </button>
          <button type="button" aria-label="树列" className="ml-[12px]">
            <Ico w={20}>
              <TreeGlyph c="#888" />
              <path d="M7 1h3v12M12 1h3v10M17 1h2v10" stroke="#117a86" strokeWidth="1.500" />
              <Eye x={9} y={11} />
            </Ico>
          </button>
        </div>
        <div className="flex h-[27px] items-start border-b border-[#cfcfd2] pl-1">
          <div className="flex h-[21px] w-[159px] items-center border border-[#c2c2c6] bg-white">
            <input aria-label="查找" className="w-0 min-w-0 flex-1 bg-transparent px-1 text-xs outline-none" />
            <button type="button" aria-label="清除" className="pr-1"><Ico w={9}><path d="M1 1l7 7M8 1L1 8" stroke="#777" strokeWidth="1.300" /></Ico></button>
          </div>
          <div className="flex h-[22px] items-center gap-[9px] pl-[6px]">
            <button type="button" aria-label="查找选项"><Caret /></button>
            <button type="button" aria-label="查找"><Binoculars /></button>
            <button type="button" aria-label="过滤"><Ico><path d="M0 1h16l-6 7v7l-4-2V8z" fill="#f2f2f2" stroke="#a5a5a5" /></Ico></button>
            <button type="button" aria-label="添加" className="ml-[3px]"><Ico w={11}><path d="M5.500 0v11M0 5.500h11" stroke="#8e8e8e" strokeWidth="2.500" /></Ico></button>
          </div>
        </div>
        <div className="mt-[6px] flex min-h-0 flex-1">
          <div className="min-w-0 flex-1 overflow-hidden">
            <ul className="-mt-3">
              {rows.map(([name, level]) => <TreeRow key={name} name={name} level={level} />)}
            </ul>
          </div>
          <div className="mr-[2px] flex w-[18px] flex-col border border-[#cbcbcd] bg-[#ececed]">
            <button type="button" aria-label="向上" className="flex h-4 items-center justify-center border-b border-[#cbcbcd] bg-[#fafafc]"><span className="rotate-180"><Caret /></span></button>
            <div className="grow-[166]" />
            <div className="mx-px flex grow-[302] items-center justify-center rounded-xs border border-[#c6c6ca] bg-gradient-to-r from-white to-[#ececf0]">
              <Ico w={7} h={12}><path d="M0 1.500h7M0 4.500h7M0 7.500h7M0 10.500h7" stroke="#b2b2b2" /></Ico>
            </div>
            <div className="h-1" />
            <button type="button" aria-label="向下" className="flex h-4 items-center justify-center border-t border-[#cbcbcd] bg-[#fafafc]"><Caret /></button>
          </div>
        </div>
      </div>
    </aside>
  );
}

/* ---------- graphics area ---------- */

const bands = [
  "h-[38px] bg-[#c6daf4]", "h-[78px] bg-[#a5c8f0]", "h-[72px] bg-[#aacacf]", "h-[16px] bg-[#b7b5d6]", "h-[24px] bg-[#a4b4c2]",
  "h-[99px] bg-[#93b6c8]", "h-[20px] bg-[#84a7d8]", "h-[53px] bg-[#80a3d0]", "h-[16px] bg-[#8d8dcf]", "h-[2px] bg-[#7f9cac]",
  "h-[34px] bg-[#7b85b4]", "h-[2px] bg-[#6a87b8]", "h-[4px] bg-[#7585b4]", "h-[71px] bg-[#6a8aba]", "h-[13px] bg-[#6686bd]",
  "h-[24px] bg-[#6584b9]", "h-[38px] bg-[#6180b5]", "h-[3px] bg-[#5f849d]", "h-[3px] bg-[#4b7aae]", "flex-1 bg-[#5978b0]",
];

const GREEN = "#84968f";
const BLUE = "#6b7691";
const NAVY = "#30345c";

const P = ({ p, f = GREEN, n = false }: { p: string; f?: string; n?: boolean }) => <polygon points={p} fill={f} stroke={n ? "none" : undefined} />;

const Bore = ({ x, y, r = 4.4, s = 2.9 }: { x: number; y: number; r?: number; s?: number }) => (
  <g>
    <ellipse cx={x} cy={y} rx={r} ry={s} fill="#69747a" />
    <path d={`M${x - r + 1} ${y + 0.4}q${r - 1} ${s} ${2 * r - 2} 0`} stroke="#98a5aa" fill="none" />
  </g>
);

const boreIndex = [0, 1, 2, 3, 4, 5, 6, 7, 8, 9, 12, 13];

function Model() {
  return (
    <svg viewBox="268 185 1014 628" className="absolute top-0 left-0 h-[628px] w-[1014px]" aria-label="装配模型" role="img">
      <g stroke="#24282c" strokeWidth="0.9" strokeLinejoin="round" fill="none">
        {/* end plate and rear cheek */}
        <P f={NAVY} p="358,428 510,271 512,292 502,331 405,430 380,460 393,546 372,569" />
        <P p="351,427 503,269 510,271 358,428" />
        <P f={BLUE} p="351,427 358,428 372,569 365,568" />
        <P f={BLUE} p="498,293 570,308 577,366 533,357 501,331" />
        <P p="498,293 501,289 574,303 570,308" />
        <P f={NAVY} p="570,308 574,303 580,367 577,366" />

        {/* base plate with its two windows */}
        <path
          fillRule="evenodd"
          fill={GREEN}
          d="M445 445L533 357L1082 474L957 604L449 497ZM662 447L880 493L855 525L635 474ZM940 506L984 516L958 542L926 536Z"
        />
        <P f={BLUE} p="449,497 957,604 957,612 449,505" />
        <P f={NAVY} p="957,604 1082,474 1083,480 957,612" />
        <P f={BLUE} p="662,447 880,493 876,499 662,454" />
        <P f={NAVY} p="662,447 662,454 641,475 635,474" />
        <P p="651,465 709,477 698,488 641,476" />
        <P f={NAVY} p="709,477 711,489 698,488" />
        <path d="M705 485l3-4v6z" fill="#9ab" />
        <P f={BLUE} p="940,506 984,516 980,521 938,512" />
        <P f={BLUE} p="525,365 746,411 743,415 525,368" />
        <P f={BLUE} p="449,484 638,524 636,527 449,487" />
        <Bore x={1067} y={477} r={3} s={2} />
        <Bore x={952} y={597} r={3} s={2} />

        {/* rear rail */}
        <P p="521,384 1047,498 1041,506 511,393" />
        <path d="M513 391L1042 504" strokeWidth=".7" />
        <P f={BLUE} p="511,393 1041,506 1041,515 511,402" />
        <P f={NAVY} p="1041,506 1047,498 1048,508 1041,515" />
        {boreIndex.map((i) => <Bore key={i} x={526 + i * 38.6} y={390.7 + i * 8.2} />)}

        {/* front rail */}
        <P p="468,440 995,553 988,560 458,447" />
        <path d="M460 445L990 558" strokeWidth=".7" />
        <P f={BLUE} p="458,447 988,560 988,569 458,456" />
        <P f={NAVY} p="988,560 995,553 995,562 988,569" />
        {boreIndex.map((i) => <Bore key={i} x={473.3 + i * 38.6} y={445.4 + i * 8.2} />)}

        {/* parts beside the end plate, drawn at three times their size */}
        <g transform="translate(340 260) scale(.33333)" strokeWidth="2.700">
          <P f={NAVY} p="555,328 553,350 540,360 530,383 516,390 515,355" />
          <P f={NAVY} p="395,488 397,510 380,530 370,550 350,562 352,588 315,580 320,562" />
          <path d="M520 352L555 322M325 560L392 492" stroke={GREEN} strokeWidth="4" />
          <P f={BLUE} p="315,562 330,562 330,582 315,580" />
          <ellipse cx="343" cy="578" rx="12" ry="8" fill="#50566a" />
          <P p="480,210 608,238 305,545 195,510" />
          <P f={NAVY} p="608,238 608,260 315,565 307,540" />
          <P f={GREEN} p="490,222 576,241 570,250 484,233" />
          {[[438, 285], [514, 300], [281, 449], [357, 464], [224, 508], [300, 524]].map(([x, y]) => (
            <ellipse key={x} cx={x} cy={y} rx="8" ry="5" fill="#5d686e" />
          ))}
          <ellipse cx="411" cy="454" rx="4" ry="6" fill="#7b8492" />

          <P f={BLUE} p="320,255 375,267 322,320" />
          <P p="320,255 328,244 382,255 375,267" />
          <P f={BLUE} p="260,315 312,328 322,438 268,430" />
          <P p="260,315 270,305 318,317 312,328" />
          <P p="312,328 385,254 407,260 333,333" />
          <P f={BLUE} p="312,328 333,333 345,442 322,438" />
          <P f={NAVY} p="333,333 407,260 411,318 400,380 345,442" />
          {[[402, 292], [341, 353], [348, 411]].map(([x, y]) => (
            <ellipse key={x} cx={x} cy={y} rx="4" ry="6" fill="#cfd6da" />
          ))}

          <P f="#76838a" p="358,355 395,318 455,316 448,400 414,404 372,396 360,384" />
          <P p="372,358 397,320 455,317 440,376 385,372" />
          <path d="M382 358L422 322" strokeWidth="7" />
          <path d="M370 368L420 376L414 404M420 376L445 372" />
          <P f="#626a78" p="420,380 444,382 440,406 415,404" />
          <path d="M490 314C455 316 440 345 442 385C444 420 455 434 478 430L500 425Z" fill="#8f9ca8" />
          <path d="M462 328q-15 40-6 90" stroke="#b4c0c8" strokeWidth="7" />
          <ellipse cx="490" cy="370" rx="28" ry="55" fill={NAVY} />
          <P p="460,388 472,375 520,383 510,394" />
          <P f={BLUE} p="458,386 508,394 503,437 457,426" />
          <P f={NAVY} p="508,394 520,383 516,428 503,437" />
          <circle cx="482" cy="410" r="7" fill="#aab2b8" />
          <path d="M490 360v14" stroke="#b7c0c8" strokeWidth="6" />

          <P f={BLUE} p="85,505 303,548 333,893 118,848" />
          <P p="85,505 97,492 312,537 303,548" />
          <P f={NAVY} p="303,548 312,537 346,882 333,893" />
          {[[138, 695], [210, 711], [282, 726]].map(([x, y]) => (
            <ellipse key={x} cx={x} cy={y} rx="6" ry="6" fill="#7d858f" />
          ))}
        </g>

        {/* carriage, drawn at three times its size */}
        <g transform="translate(800 410) scale(.33333)" strokeWidth="2.700">
          <P f={NAVY} p="512,170 512,185 490,212 468,235 470,262 425,250" />
          <path d="M440 240L505 180" stroke="#747f88" />
          <P f={BLUE} p="388,290 416,275 418,308 406,318 388,312" />
          <P f={NAVY} p="404,284 416,274 418,308 406,318" />
          <P f={BLUE} p="350,335 378,316 382,380 350,374" />
          <P f={NAVY} p="378,316 388,322 394,382 382,380" />
          <P f={NAVY} p="355,342 340,372 312,400 312,425 272,415" />
          <path d="M285 412q12-10 24 6z" fill="#7b858c" />
          <path d="M440 255q12-12 26 4z" fill="#7b858c" />

          <P p="420,42 580,76 236,437 75,403" />
          <P f={BLUE} p="75,403 236,437 236,458 77,424" />
          <P f={NAVY} p="580,76 580,98 236,458 236,437" />
          {[[396, 120], [472, 136], [415, 195], [238, 284], [314, 300], [182, 343], [257, 359]].map(([x, y]) => (
            <ellipse key={x} cx={x} cy={y} rx="10" ry="6" fill="#5d686e" />
          ))}
          {[[350, 245], [394, 254]].map(([x, y]) => <ellipse key={x} cx={x} cy={y} rx="6" ry="4" fill="#5d686e" />)}
          {[[431, 244], [383, 293]].map(([x, y]) => <ellipse key={x} cx={x} cy={y} rx="4" ry="7" fill="#b9c1c6" />)}

          <P f={BLUE} p="215,172 262,182 262,228 217,216" />
          <P p="215,172 228,160 268,168 262,182" />
          <circle cx="237" cy="202" r="6" fill="#9aa3ac" />
          <ellipse cx="290" cy="175" rx="30" ry="60" fill="#8797a6" />
          <path d="M300 120q-28 20-28 80" stroke="#aab9c4" strokeWidth="5" />
          <P p="272,155 340,88 363,93 293,165" />
          <P f={BLUE} p="272,155 293,165 300,278 280,272" />
          <P f={NAVY} p="293,165 363,93 372,205 300,278" />
          <ellipse cx="332" cy="187" rx="6" ry="9" fill="#cfd8dd" />
        </g>
      </g>
    </svg>
  );
}

const Mag = ({ sign }: { sign?: string }) => (
  <>
    <path d="M12 12l7 7" stroke="#a5a5a5" strokeWidth="3.600" />
    <path d="M12 12l7 7" stroke="#eee" strokeWidth="2" />
    <circle cx="8" cy="7.500" r="5.500" fill="#e3f1fc" stroke="#6fa8d4" strokeWidth="1.300" />
    {sign && <path d={sign} stroke="#0d5c9c" strokeWidth="2" />}
  </>
);

const Corner = () => <path d="M23 18v4h-4z" fill="#333" />;

const viewTools: [string, ReactNode][] = [
  ["重新调整", <><rect x="2.500" y="2.500" width="17" height="17" fill="#fafafa" stroke="#b5b5b5" /><g transform="translate(3 2)"><Mag /></g></>],
  ["放大", <g transform="translate(1 1)"><Mag sign="M4.500 7.500h7M8 4v7" /></g>],
  ["缩小", <g transform="translate(1 1)"><Mag sign="M4.500 7.500h7" /></g>],
  ["重画", <><path d="M2 2h19v18H2z" fill="#dde9f3" stroke="#aaa" /><path d="M21 2v18H8q2-7 13-18z" fill="#3f86bd" /><path d="M2 13q5-6 9-4 4 2 9-7" stroke="#a5c5de" strokeWidth="2" /><path d="M6 20q2-7 8-9" stroke="#1b5f98" strokeWidth="2" /></>],
  ["显示样式", <><Box x={1} y={1} s={14} d={5} front="#fff" top="#bfe6fc" side="#79b2d2" line="#14618f" /><Corner /></>],
  ["已保存方向", <><path d="M1 6l4-4h14v12l-4 6H1z" fill="#9cd0f2" stroke="#b5cbd8" /><path d="M1 6h13v14H1z" fill="#fafafa" stroke="#ccc" /><path d="M12.500 10.500h7v10h-7z" fill="#fff" stroke="#777" /><path d="M14 13h4M14 15.500h4M14 18h4" stroke="#777" /><Corner /></>],
  ["视图管理器", <><rect x="2.500" y="1.500" width="16" height="19" fill="#fff" stroke="#999" /><path d="M2 5h17M2 9h17M2 13h17M2 17h17M7.500 5v16" stroke="#b5b5b5" /><g transform="translate(11 12) scale(.8)"><Camera /></g></>],
  ["截面显示", <><path d="M2 8l5-5h12l-5 5v12H2z" fill="#c5e5fa" stroke="#b0b0b0" /><path d="M2 8h12v11H2z" fill="#fafafa" stroke="#bbb" /><path d="M14 8l5-5v6l-5 5z" fill="#6fb5e0" /><path d="M14 12.500h8" stroke="#333" strokeWidth="1.600" /><path d="M18 8.500v8l-5-4z" fill="#333" /></>],
  ["剖切", <><path d="M3 10l4-3h12v10l-4 5H3z" fill="#dff1fc" stroke="#a5c8dc" /><path d="M3 10h11v11H3z" fill="#a9ddf8" /><path d="M10 0v5M22 12h-4" stroke="#333" strokeWidth="1.400" /><path d="M7 4h6l-3 4zM19 9v6l-5-3z" fill="#333" /></>],
  ["基准显示过滤器", <><Cross x={0} y={1} /><path d="M12 2l-2 4M9 8l-2 4M6 14l-3 6M9 13h13M12 20l7-13M12 7l7 13" stroke="#8a5a20" strokeWidth="1.300" /><Corner /></>],
  ["平面显示", <><path d="M8 5h13l-5 12H2z" stroke="#8a5a20" strokeWidth="1.400" /><Eye x={11} y={14} /></>],
  ["轴显示", <><path d="M11 1L9 5M8 7l-1 4M6 13l-3 7" stroke="#8a5a20" strokeWidth="1.400" /><Eye x={10} y={14} /></>],
  ["点显示", <><Cross x={4} y={1} /><Cross x={14} y={5} /><Cross x={1} y={11} /><Eye x={11} y={14} /></>],
  ["坐标系显示", <><path d="M2 11h14M6 18L15 3M6 3l9 15" stroke="#8a5a20" strokeWidth="1.200" /><path d="M0 0l2 3 2-3M2 3v3M0 17h4l-4 5h4M17 7l4 5m0-5l-4 5" stroke="#333" /><Eye x={10} y={15} /></>],
  ["注释显示", <><rect x="1.500" y="2.500" width="12" height="8" fill="#fdfbdc" stroke="#aaa" /><path d="M14 5h6q0 4-4 7M14 9l2 4 4-1" stroke="#555" /><Eye x={11} y={14} /></>],
  ["旋转中心", <><path d="M4 4l7 7h8M11 11l-7 8" stroke="#555" strokeWidth="1.600" /><circle cx="4" cy="4" r="2.800" fill="#7cb87c" stroke="#4f8f4f" /><circle cx="19" cy="11" r="2.800" fill="#ec8080" stroke="#c05050" /><circle cx="4" cy="19" r="2.800" fill="#7aaade" stroke="#4a7ab0" /></>],
];

function Graphics() {
  return (
    <main className="relative mr-[3px] min-w-0 flex-1 overflow-hidden">
      <div className="absolute inset-0 flex flex-col">
        {bands.map((b) => <div key={b} className={`shrink-0 ${b}`} />)}
      </div>
      <Model />
      <div className="relative flex justify-center pt-[7px]">
        <div role="toolbar" aria-label="图形中" className="flex h-[31px] border border-[#c6c6ca] bg-white">
          <span className="w-[6px] border-r border-[#c6c6ca] bg-[#ececed]" />
          {viewTools.map(([name, art]) => (
            <button
              key={name}
              type="button"
              aria-label={name}
              className={`flex w-[31px] items-center justify-center border-r border-[#c6c6ca] ${name === "轴显示" ? "border-t-2 border-l border-t-[#8c8c92] bg-[#dfdfea]" : ""}`}
            >
              <Ico w={23}>{art}</Ico>
            </button>
          ))}
          <span className="w-[5px] bg-[#ececed]" />
        </div>
      </div>
      <p className="absolute top-[500px] left-[10px] text-[13px] leading-[18px] text-[#6a7090]">造型状态:主样式(+)</p>
      <svg width="13" height="20" viewBox="0 0 13 20" aria-hidden="true" className="absolute top-[499px] left-[478px]">
        <path d="M1 1v15l3.500-3.300 3 6 2.600-1.200-2.900-5.700H12z" fill="#fff" stroke="#000" strokeWidth="1.200" />
      </svg>
    </main>
  );
}

/* ---------- status bar ---------- */

const Bar = () => <span className="h-[30px] w-[2px] border-l border-[#cfcfd2] bg-white" />;

function StatusBar() {
  return (
    <footer className="flex h-[41px] shrink-0 items-center border-t-2 border-b-[3px] border-[#999] bg-[#ececec] pr-[17px] pl-[6px]">
      <button type="button" aria-label="切换导航区" className="mt-1 flex size-[22px] items-center justify-center border border-t-2 border-[#c6c6ca] border-t-[#8f8f94] bg-[#e6e6f2]">
        <Ico w={16} h={18}><TreeGlyph /></Ico>
      </button>
      <button type="button" aria-label="浏览器" className="mt-1 mr-[10px] ml-1 flex size-[22px] items-center justify-center border border-[#c6c6ca] bg-[#f7f7fa]">
        <Ico w={18}>
          <circle cx="9" cy="9" r="6.500" fill="#2f86c8" />
          <path d="M5 6l4-2 1 4-3 2zM10 10l4-2-2 5z" fill="#c4e3f6" />
          <ellipse cx="9" cy="9" rx="9.500" ry="4.500" transform="rotate(-42 9 9)" stroke="#7c8894" />
        </Ico>
      </button>
      <Bar />
      <div className="flex-1" />
      <Bar />
      <span className="w-7" />
      <Bar />
      <span className="flex w-[34px] items-center gap-[2px] pl-1">
        <span className="size-[11px] rounded-full bg-[#61bd68]" />
        <span className="size-[6px] rounded-full bg-[#c8c8c8]" />
        <span className="size-[6px] rounded-full bg-[#c8c8c8]" />
      </span>
      <Bar />
      <span className="w-[39px] pl-1"><Ico w={13} h={16}><path d="M1 0v16" stroke="#b2b2b2" strokeWidth="2" /><path d="M2 0l11 4-11 4z" fill="#b2b2b2" /></Ico></span>
      <Bar />
      <button type="button" aria-label="查找" className="ml-px flex h-7 w-10 items-center justify-center rounded-xs border border-[#bcbcc2] bg-gradient-to-b from-white to-[#ececf2]"><Binoculars /></button>
      <span className="w-px" />
      <Bar />
      <button type="button" aria-label="选择框" className="ml-[3px] flex h-7 w-10 items-center justify-center rounded-xs border border-[#bcbcc2] bg-gradient-to-b from-white to-[#ececf2]">
        <Ico w={18}>
          <path d="M.500 4.500l4-4h13v12l-4 5H.500z" fill="#fff" stroke="#444" />
          <path d="M.500 4.500h13v13M13.500 4.500l4-4" stroke="#444" />
          <path d="M3 8h8v7H3z" fill="#fbdcb0" stroke="#d09a5e" />
          <path d="M5.500 7.500h6v5h-6z" fill="#aedaf7" stroke="#3a7eb8" />
        </Ico>
      </button>
      <div className="ml-24 grid w-[176px] items-center">
        <select aria-label="选择过滤器" className="col-start-1 row-start-1 h-[19px] w-full appearance-none border border-[#c2c2c6] bg-gradient-to-b from-white to-[#f1f1f6] pl-[6px] text-xs leading-[17px] text-[#333] outline-none">
          <option>零件</option>
        </select>
        <span className="pointer-events-none col-start-1 row-start-1 flex h-[17px] w-[15px] items-center justify-center justify-self-end border-l border-[#c2c2c6]"><Caret /></span>
      </div>
    </footer>
  );
}

export default function App() {
  return (
    <div className="flex h-screen flex-col overflow-hidden border-l border-[#969698] bg-[#fcfdff] font-['Liberation_Sans','Noto_Sans_CJK_SC',sans-serif]">
      <Header />
      <div className="flex min-h-0 flex-1">
        <ModelTree />
        <Graphics />
      </div>
      <StatusBar />
    </div>
  );
}
